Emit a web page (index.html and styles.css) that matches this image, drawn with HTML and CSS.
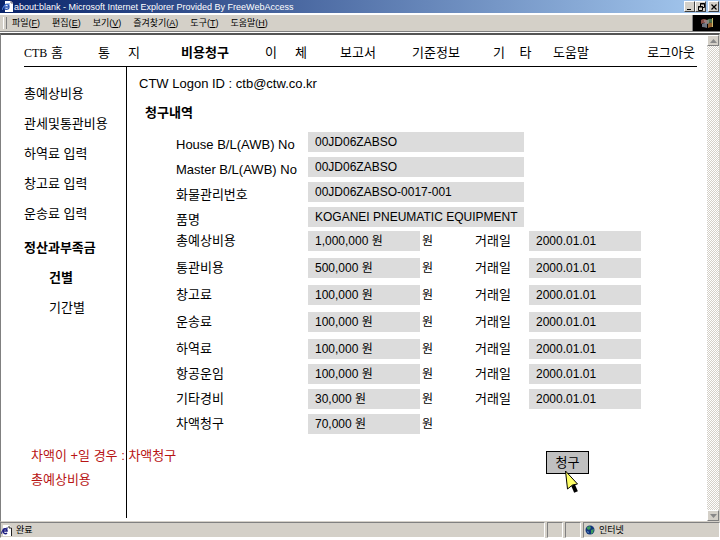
FILE: index.html
```html
<!DOCTYPE html>
<html lang="ko">
<head>
	<meta charset="UTF-8">
	<meta name="viewport" content="width=device-width">
	<title>about:blank - Microsoft Internet Explorer Provided By FreeWebAccess</title>
	<link rel="stylesheet" href="styles.css">
</head>
<body>
<header class="titlebar">
	<svg class="ie" width="11" height="11" viewBox="0 0 11 11">
		<path d="M3 0h6l2 2v9H3z" fill="#fff"/>
		<path d="M9 0v2h2" fill="none" stroke="#667"/>
		<path d="M2 6h5c0-4-5-3-5 0 0 3 4 3 5 1" fill="none" stroke="#2450b0" stroke-width="1.4"/>
		<path d="M0 9C1 5 5 2 8 3" fill="none" stroke="#5c8ae0"/>
	</svg>
	<span class="caption">about:blank - Microsoft Internet Explorer Provided By FreeWebAccess</span>
	<button class="win" aria-label="최소화"><svg width="8" height="8"><path d="M1 6.5h4" stroke="#000"/></svg></button>
	<button class="win" aria-label="이전 크기로"><svg width="8" height="8"><path d="M3.500 3V.500h4v4H6M3 1h5M1.500 3.500h4v4h-4zM1 4h5" fill="none" stroke="#000"/></svg></button>
	<button class="win close" aria-label="닫기"><svg width="8" height="8"><path d="M1.500 1.500l5 5M6.500 1.500l-5 5" stroke="#000" stroke-width="1.200"/></svg></button>
</header>
<div class="menubar">
	<button>파일(<u>F</u>)</button>
	<button>편집(<u>E</u>)</button>
	<button>보기(<u>V</u>)</button>
	<button>즐겨찾기(<u>A</u>)</button>
	<button>도구(<u>T</u>)</button>
	<button>도움말(<u>H</u>)</button>
	<div class="brand">
		<svg width="14" height="12" viewBox="0 0 14 12">
			<path d="M1 3q3-2 6 0v4q-3-2-6 0z" fill="#875048"/>
			<path d="M7 3q2-2 5-1v4q-3-1-5 1z" fill="#4d7350"/>
			<path d="M2 7q3-2 5 0v4q-3-1-5-1z" fill="#6c7480"/>
			<path d="M8 7q2-2 4-1v4q-2 0-4 1z" fill="#94602e"/>
			<path d="M12.500 1v9" stroke="#c8ba70"/>
			<path d="M4 4h5M5 6h4" stroke="#b0a8b0"/>
		</svg>
	</div>
</div>
<div class="view">
	<div class="page">
		<nav class="topnav">
			<a href="#"><span class="logo">CTB</span> 홈</a>
			<a href="#">통&nbsp;&nbsp;&nbsp;&nbsp;&nbsp;지</a>
			<a href="#" class="active">비용청구</a>
			<a href="#">이&nbsp;&nbsp;&nbsp;&nbsp;&nbsp;체</a>
			<a href="#">보고서</a>
			<a href="#">기준정보</a>
			<a href="#">기&nbsp;&nbsp;&nbsp;&nbsp;타</a>
			<a href="#">도움말</a>
			<a href="#">로그아웃</a>
		</nav>
		<div class="columns">
			<aside class="sidebar">
				<ul class="sidenav">
					<li><a href="#">총예상비용</a></li>
					<li><a href="#">관세및통관비용</a></li>
					<li><a href="#">하역료 입력</a></li>
					<li><a href="#">창고료 입력</a></li>
					<li><a href="#">운송료 입력</a></li>
					<li class="group"><a href="#" class="active">정산과부족금</a>
						<ul>
							<li><a href="#" class="active">건별</a></li>
							<li><a href="#">기간별</a></li>
						</ul>
					</li>
				</ul>
				<div class="notes">
					<p>차액이 +일 경우 : 차액청구</p>
					<p>총예상비용</p>
				</div>
			</aside>
			<main class="content">
				<p class="logon">CTW Logon ID : ctb@ctw.co.kr</p>
				<h1>청구내역</h1>
				<form>
					<div class="shipment">
						<div class="row"><label for="house">House B/L(AWB) No</label><input id="house" class="wide" value="00JD06ZABSO" readonly></div>
						<div class="row"><label for="master">Master B/L(AWB) No</label><input id="master" class="wide" value="00JD06ZABSO" readonly></div>
						<div class="row"><label for="cargo">화물관리번호</label><input id="cargo" class="wide" value="00JD06ZABSO-0017-001" readonly></div>
						<div class="row"><label for="item">품명</label><input id="item" class="wide" value="KOGANEI PNEUMATIC EQUIPMENT" readonly></div>
					</div>
					<div class="costs">
						<div class="row"><label for="a1">총예상비용</label><input id="a1" class="amount" value="1,000,000 원" readonly><span class="unit">원</span><label for="d1">거래일</label><input id="d1" value="2000.01.01" readonly></div>
						<div class="row"><label for="a2">통관비용</label><input id="a2" class="amount" value="500,000 원" readonly><span class="unit">원</span><label for="d2">거래일</label><input id="d2" value="2000.01.01" readonly></div>
						<div class="row"><label for="a3">창고료</label><input id="a3" class="amount" value="100,000 원" readonly><span class="unit">원</span><label for="d3">거래일</label><input id="d3" value="2000.01.01" readonly></div>
						<div class="row"><label for="a4">운송료</label><input id="a4" class="amount" value="100,000 원" readonly><span class="unit">원</span><label for="d4">거래일</label><input id="d4" value="2000.01.01" readonly></div>
					</div>
					<div class="costs tight">
						<div class="row"><label for="a5">하역료</label><input id="a5" class="amount" value="100,000 원" readonly><span class="unit">원</span><label for="d5">거래일</label><input id="d5" value="2000.01.01" readonly></div>
						<div class="row"><label for="a6">항공운임</label><input id="a6" class="amount" value="100,000 원" readonly><span class="unit">원</span><label for="d6">거래일</label><input id="d6" value="2000.01.01" readonly></div>
						<div class="row"><label for="a7">기타경비</label><input id="a7" class="amount" value="30,000 원" readonly><span class="unit">원</span><label for="d7">거래일</label><input id="d7" value="2000.01.01" readonly></div>
						<div class="row"><label for="a8">차액청구</label><input id="a8" class="amount" value="70,000 원" readonly><span class="unit">원</span></div>
					</div>
					<div class="actions">
						<button type="button" class="submit">청구
							<svg class="pointer" width="15" height="25" viewBox="0 0 15 25">
								<path d="M8 15l3 7" stroke="#000" stroke-width="4"/>
								<path d="M.500 1l12 13-5 1-5 4z" fill="#ffff66" stroke="#000"/>
							</svg>
						</button>
					</div>
				</form>
			</main>
		</div>
	</div>
	<div class="scrollbar">
		<button aria-label="위로"><svg width="7" height="4"><path d="M0 4l3.500-4L7 4z" fill="#888"/></svg></button>
		<button aria-label="아래로"><svg width="7" height="4"><path d="M0 0l3.500 4L7 0z" fill="#888"/></svg></button>
	</div>
</div>
<footer class="statusbar">
	<div class="pane state">
		<svg width="11" height="11" viewBox="0 0 11 11">
			<path d="M2 0h6l3 3v8H2z" fill="#fff"/>
			<path d="M8 1v2h2.500v8" fill="none" stroke="#222"/>
			<path d="M2 6h4c0-3-4-3-4 0 0 3 3 3 4 2" fill="none" stroke="#1c1c80" stroke-width="1.500"/>
			<path d="M0 9C1 5 4 3 7 3" fill="none" stroke="#1c1c80"/>
		</svg>
		완료
	</div>
	<div class="pane small"></div>
	<div class="pane small"></div>
	<div class="pane zone">
		<svg width="10" height="10" viewBox="0 0 10 10">
			<circle cx="5" cy="5" r="4.500" fill="#12357c"/>
			<path d="M2 2l3-1 1 2-2 2-2-1zM6 5l3-1-1 4-2 1z" fill="#3d9a5c"/>
			<path d="M2 6l2 1-1 1z" fill="#7fb4e0"/>
		</svg>
		인터넷
	</div>
</footer>
</body>
</html>
```

FILE: styles.css
```css
* { box-sizing: border-box; }

body {
	margin: 0;
	min-height: 100vh;
	display: flex;
	flex-direction: column;
	font: 13px/18px "Liberation Sans", "Noto Sans CJK KR", sans-serif;
	color: #000;
	background: #fff;
}

a {
	color: inherit;
	text-decoration: none;
}

button, input {
	font-family: inherit;
	color: inherit;
	border: 0;
	margin: 0;
	padding: 0;
}

ul, p, h1 {
	margin: 0;
	padding: 0;
	list-style: none;
}

.active { font-weight: bold; }

/* browser chrome */
.titlebar {
	display: flex;
	align-items: center;
	height: 13px;
	padding: 0 1px 0 2px;
	background: linear-gradient(to right, #0a246a, #a6caf0);
	color: #fff;
}

.caption {
	flex: 1;
	padding-left: 1px;
	font-size: 9px;
	line-height: 12px;
}

.win {
	display: flex;
	align-items: center;
	justify-content: center;
	width: 11px;
	height: 11px;
	background: #d4d0c8;
	border: 1px solid;
	border-color: #fff #404040 #404040 #fff;
}

.close { margin-left: 2px; }

.menubar {
	display: flex;
	align-items: center;
	gap: 12px;
	height: 18px;
	margin-top: 1px;
	padding-left: 8px;
	background: #d4d0c8;
	border-top: 1px solid #fff;
	border-bottom: 1px solid #808080;
}

.menubar::before {
	content: "";
	width: 2px;
	height: 12px;
	margin: 0 -7px 0 -5px;
	border-left: 1px solid #fff;
	border-right: 1px solid #808080;
}

.menubar button {
	font-size: 9px;
	line-height: 14px;
	background: none;
}

.brand {
	display: flex;
	align-items: center;
	justify-content: center;
	width: 28px;
	height: 16px;
	margin-left: auto;
	background: #000;
	border-left: 1px solid #808080;
}

.view {
	flex: 1;
	display: flex;
	margin-top: 1px;
	border-top: 2px solid #555;
	border-left: 1px solid #808080;
	border-right: 1px solid #d4d0c8;
	border-bottom: 1px solid #d4d0c8;
}

.page {
	flex: 1;
	display: flex;
	flex-direction: column;
	padding: 0 10px 3px 23px;
}

.scrollbar {
	display: flex;
	flex-direction: column;
	justify-content: space-between;
	width: 12px;
	background: repeating-conic-gradient(#d4d0c8 0 25%, #fff 0 50%) 0 0 / 2px 2px;
}

.scrollbar button {
	display: flex;
	align-items: center;
	justify-content: center;
	height: 11px;
	background: #d4d0c8;
	border: 1px solid;
	border-color: #fff #808080 #808080 #fff;
}

/* page */
.topnav {
	display: grid;
	grid-template-columns: 74px 83px 84px 75px 72px 81px 60px 1fr auto;
	padding: 9px 2px 4px 0;
	border-bottom: 1px solid #000;
	white-space: nowrap;
}

.logo {
	font-family: "Liberation Serif", serif;
	font-size: 12px;
}

.columns {
	flex: 1;
	display: flex;
}

/* the notes run past the divider */
.sidebar {
	flex: 0 0 103px;
	min-width: 0;
	display: flex;
	flex-direction: column;
	justify-content: space-between;
	padding: 12px 0 26px;
	border-right: 1px solid #000;
	white-space: nowrap;
}

.sidenav { line-height: 30px; }

.sidenav .group { padding-top: 4px; }

.sidenav ul { padding-left: 25px; }

.notes {
	padding-left: 7px;
	line-height: 24px;
	color: #b81414;
}

.content {
	flex: 1;
	padding: 8px 0 0 12px;
}

.content h1 {
	padding: 11px 0 10px 6px;
	font-size: 13px;
	line-height: 18px;
}

.row {
	display: grid;
	grid-template-columns: 132px 112px 55px 54px 112px;
	height: 25px;
	padding-left: 37px;
}

.row input {
	width: 100%;
	height: 20px;
	padding-left: 7px;
	font-size: 12px;
	background: #dcdcdc;
}

.row .wide {
	grid-column: 2 / span 3;
	width: 216px;
}

.row .amount { padding-bottom: 3px; }

.row label, .unit { line-height: 20px; }

.unit {
	padding-left: 2px;
	font-size: 12px;
}

.shipment { margin-bottom: -1px; }

.shipment label { padding-top: 3px; }

.costs .row { height: 27px; }

.tight .row { height: 25px; }

.actions {
	display: flex;
	justify-content: flex-end;
	padding: 12px 108px 0 0;
}

.submit {
	position: relative;
	width: 43px;
	height: 23px;
	font-size: 13px;
	line-height: 20px;
	background: #c0c0c0;
	border: 1px solid #000;
}

.pointer {
	position: absolute;
	left: 18px;
	top: 18px;
}

/* status bar */
.statusbar {
	display: flex;
	gap: 2px;
	height: 16px;
	margin-bottom: 2px;
	background: #d4d0c8;
	font-size: 9px;
	line-height: 12px;
}

.pane {
	display: flex;
	align-items: center;
	gap: 4px;
	border: 1px solid;
	border-color: #808080 #fff #fff #808080;
}

.state { flex: 1; }

.small { width: 16px; }

.zone {
	width: 137px;
	padding-left: 1px;
}
```
